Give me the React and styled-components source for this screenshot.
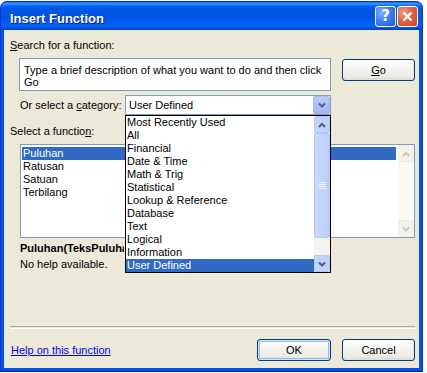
import { createGlobalStyle, styled } from 'styled-components'

const GlobalStyle = createGlobalStyle`
  html, body {
    margin: 0;
    padding: 0;
    background: #ffffff;
  }

  body {
    font-family: 'Liberation Sans', Arial, sans-serif;
    font-size: 11px;
    line-height: 13px;
    color: #000000;
  }
`

const Window = styled.div`
  width: 423px;
  height: 371px;
  margin-top: 1px;
  box-sizing: border-box;
  border: 1px solid #0831d9;
  border-bottom-color: #001ea0;
  border-radius: 7px 7px 0 0;
  background: #0054e3;
  padding: 0 3px 3px;
  display: flex;
  flex-direction: column;
`

const TitleBar = styled.div`
  height: 28px;
  margin: 0 -3px;
  padding: 0 4px 0 9px;
  border-radius: 6px 6px 0 0;
  background: linear-gradient(
    180deg,
    #0a5fe6 0%,
    #3d95ff 5%,
    #1a7cff 10%,
    #0262ee 16%,
    #0057e5 24%,
    #0054e3 50%,
    #0058ee 66%,
    #0063f8 80%,
    #0061f2 88%,
    #0050d6 94%,
    #003dc2 100%
  );
  display: flex;
  align-items: flex-start;
  justify-content: space-between;
`

const TitleText = styled.div`
  margin-top: 9px;
  font-family: 'Liberation Sans', Arial, sans-serif;
  font-weight: bold;
  font-size: 13px;
  line-height: 16px;
  color: #ffffff;
  text-shadow: 1px 1px 0 #0a1e7a;
`

const CaptionButtons = styled.div`
  margin-top: 4px;
  display: flex;
  gap: 1px;
`

const CaptionButton = styled.div`
  width: 21px;
  height: 21px;
  box-sizing: border-box;
  border: 1px solid #ffffff;
  border-radius: 3px;
  display: flex;
  align-items: center;
  justify-content: center;
  background: ${p => p.$variant === 'close'
    ? 'radial-gradient(circle at 30% 30%, #f0a088 0%, #e2623f 45%, #cc4320 100%)'
    : 'radial-gradient(circle at 30% 30%, #7fb0ff 0%, #3d7efb 45%, #2259de 100%)'};
  color: #ffffff;
  font-family: 'DejaVu Sans', sans-serif;
  font-weight: bold;
  font-size: 15px;
  line-height: 1;
`

const Panel = styled.div`
  flex: 1;
  background: #ece9d8;
  padding: 9px 4px 7px 6px;
  display: flex;
  flex-direction: column;
`

const Label = styled.div`
  height: 13px;
  white-space: nowrap;
  margin-top: ${p => p.$top || 0}px;
`

const SearchRow = styled.div`
  margin: 6px 0 0 9px;
  display: flex;
  align-items: flex-start;
  gap: 11px;
`

const SearchBox = styled.div`
  width: 312px;
  height: 33px;
  box-sizing: border-box;
  border: 1px solid #7f9db9;
  background: #ffffff;
  padding: 5px 4px 0;
  line-height: 12px;
`

const XPButton = styled.div`
  width: ${p => p.$width || 73}px;
  height: 22px;
  box-sizing: border-box;
  margin-top: ${p => p.$top || 0}px;
  border: 1px solid #003c74;
  border-radius: 3px;
  background: linear-gradient(180deg, #ffffff 0%, #f4f4f0 40%, #ecebe6 85%, #d6d0c5 100%);
  box-shadow: ${p => p.$default
    ? 'inset 0 0 0 1px #cee7ff, inset 0 0 0 2px #98b8ea'
    : 'inset -1px -1px 0 #e3e0d4'};
  display: flex;
  align-items: center;
  justify-content: center;
`

const CategoryRow = styled.div`
  margin: 4px 0 0 10px;
  width: 311px;
  height: 20px;
  display: flex;
  align-items: center;
  justify-content: space-between;
`

const Combo = styled.div`
  position: relative;
  width: 206px;
  height: 20px;
  box-sizing: border-box;
  border: 1px solid #7f9db9;
  background: #ffffff;
  display: flex;
  align-items: center;
  justify-content: space-between;
  padding: 0 0 0 3px;
`

const ComboButton = styled.div`
  width: 17px;
  height: 18px;
  box-sizing: border-box;
  border: 1px solid #a6bcf1;
  border-radius: 2px;
  background: linear-gradient(180deg, #b9cbf7 0%, #9fb6f2 100%);
  display: flex;
  align-items: center;
  justify-content: center;
`

const DropList = styled.div`
  position: absolute;
  z-index: 5;
  top: 19px;
  left: -1px;
  width: 206px;
  height: 158px;
  box-sizing: border-box;
  border: 1px solid #000000;
  background: #ffffff;
  display: flex;
`

const Items = styled.div`
  flex: 1;
  padding: ${p => p.$pad || 0};
`

const Item = styled.div`
  height: 13px;
  padding-left: 1px;
  white-space: nowrap;
  background: ${p => p.$selected ? '#316ac5' : 'transparent'};
  color: ${p => p.$selected ? '#ffffff' : '#000000'};
`

const ScrollBar = styled.div`
  width: 16px;
  display: flex;
  flex-direction: column;
  background: ${p => p.$disabled ? '#f9f9f6' : '#f4f3ee'};
`

const ScrollButton = styled.div`
  height: 17px;
  box-sizing: border-box;
  border: 1px solid ${p => p.$disabled ? '#eeede5' : '#b4c8f6'};
  border-radius: 2px;
  background: ${p => p.$disabled
    ? '#f3f2ec'
    : 'linear-gradient(90deg, #c6d6fc 0%, #bccefa 100%)'};
  display: flex;
  align-items: center;
  justify-content: center;
`

const Thumb = styled.div`
  height: 105px;
  box-sizing: border-box;
  border: 1px solid #b4c8f6;
  border-radius: 2px;
  background: linear-gradient(90deg, #cad9fc 0%, #bccefa 100%);
  display: flex;
  align-items: center;
  justify-content: center;
`

const Track = styled.div`
  flex: 1;
`

const ListBox = styled.div`
  margin: 6px 0 0 10px;
  width: 395px;
  height: 94px;
  box-sizing: border-box;
  border: 1px solid #7f9db9;
  background: #ffffff;
  display: flex;
`

/* the open category list covers the rest of the signature */
const Signature = styled.div`
  margin: 4px 0 0 10px;
  width: 104px;
  overflow: hidden;
  font-weight: bold;
  white-space: nowrap;
`

const HelpText = styled.div`
  margin: 3px 0 0 10px;
`

const Separator = styled.div`
  margin-top: auto;
  height: 1px;
  border-top: 1px solid #aca899;
  border-bottom: 1px solid #ffffff;
`

const Footer = styled.div`
  margin-top: 10px;
  display: flex;
  align-items: center;
  justify-content: space-between;
`

const HelpLink = styled.a`
  margin-left: 1px;
  color: #0000ff;
  text-decoration: underline;
`

const ButtonGroup = styled.div`
  display: flex;
  gap: 11px;
`

const Chevron = ({ up, color }) => (
  <svg width='8' height='6' viewBox='0 0 8 6'>
    <path
      d={up ? 'M1 5 L4 2 L7 5' : 'M1 1.5 L4 4.5 L7 1.5'}
      fill='none'
      stroke={color}
      strokeWidth='2'
    />
  </svg>
)

const Grip = () => (
  <svg width='7' height='8' viewBox='0 0 7 8'>
    {[0.5, 2.5, 4.5, 6.5].map(y => (
      <line key={y} x1='0' x2='7' y1={y} y2={y} stroke='#eef3ff' />
    ))}
  </svg>
)

const categories = [
  'Most Recently Used',
  'All',
  'Financial',
  'Date & Time',
  'Math & Trig',
  'Statistical',
  'Lookup & Reference',
  'Database',
  'Text',
  'Logical',
  'Information',
  'User Defined'
]

const functions = ['Puluhan', 'Ratusan', 'Satuan', 'Terbilang']

export default function App () {
  return (
    <>
      <GlobalStyle />
      <Window>
        <TitleBar>
          <TitleText>Insert Function</TitleText>
          <CaptionButtons>
            <CaptionButton>?</CaptionButton>
            <CaptionButton $variant='close'>
              <svg width='11' height='11' viewBox='0 0 11 11'>
                <path d='M1.5 1.5 L9.5 9.5 M9.5 1.5 L1.5 9.5' stroke='#ffffff' strokeWidth='2.2' />
              </svg>
            </CaptionButton>
          </CaptionButtons>
        </TitleBar>

        <Panel>
          <Label><u>S</u>earch for a function:</Label>

          <SearchRow>
            <SearchBox>
              Type a brief description of what you want to do and then click Go
            </SearchBox>
            <XPButton $top={1}><u>G</u>o</XPButton>
          </SearchRow>

          <CategoryRow>
            <Label>Or select a <u>c</u>ategory:</Label>
            <Combo>
              <span>User Defined</span>
              <ComboButton>
                <Chevron color='#4d6185' />
              </ComboButton>

              <DropList>
                <Items>
                  {categories.map(name => (
                    <Item key={name} $selected={name === 'User Defined'}>{name}</Item>
                  ))}
                </Items>
                <ScrollBar>
                  <ScrollButton><Chevron up color='#4d6185' /></ScrollButton>
                  <Thumb><Grip /></Thumb>
                  <Track />
                  <ScrollButton><Chevron color='#4d6185' /></ScrollButton>
                </ScrollBar>
              </DropList>
            </Combo>
          </CategoryRow>

          <Label $top={10}>Select a functio<u>n</u>:</Label>

          <ListBox>
            <Items $pad='2px 2px 0 1px'>
              {functions.map(name => (
                <Item key={name} $selected={name === 'Puluhan'}>{name}</Item>
              ))}
            </Items>
            <ScrollBar $disabled>
              <ScrollButton $disabled><Chevron up color='#c9c7ba' /></ScrollButton>
              <Track />
              <ScrollButton $disabled><Chevron color='#c9c7ba' /></ScrollButton>
            </ScrollBar>
          </ListBox>

          <Signature>Puluhan(TeksPuluhan)</Signature>
          <HelpText>No help available.</HelpText>

          <Separator />

          <Footer>
            <HelpLink href='#'>Help on this function</HelpLink>
            <ButtonGroup>
              <XPButton $width={74} $default>OK</XPButton>
              <XPButton>Cancel</XPButton>
            </ButtonGroup>
          </Footer>
        </Panel>
      </Window>
    </>
  )
}
